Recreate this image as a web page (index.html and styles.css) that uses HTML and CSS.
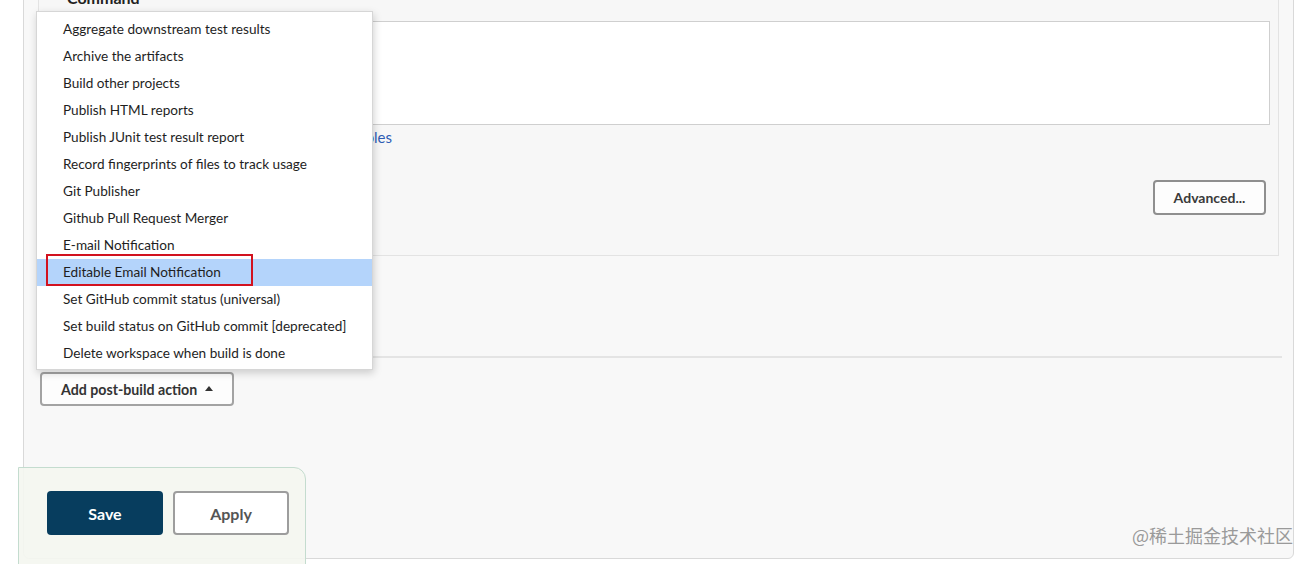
FILE: index.html
```html
<!DOCTYPE html>
<html>
<head>
<meta charset="utf-8">
<link rel="stylesheet" href="styles.css">
</head>
<body>
<div class="panel">
  <section class="step">
    <div class="step-label">Command</div>
    <div class="textarea"></div>
    <a class="env-link">See the list of available environment variables</a>
    <div class="step-actions"><button class="btn btn-adv">Advanced...</button></div>
  </section>
  <div class="divider"></div>
  <div class="post-build">
    <button class="btn btn-add">Add post-build action <span class="caret"></span></button>
  </div>
</div>

<ul class="menu">
  <li class="menu-item">Aggregate downstream test results</li>
  <li class="menu-item">Archive the artifacts</li>
  <li class="menu-item">Build other projects</li>
  <li class="menu-item">Publish HTML reports</li>
  <li class="menu-item">Publish JUnit test result report</li>
  <li class="menu-item">Record fingerprints of files to track usage</li>
  <li class="menu-item">Git Publisher</li>
  <li class="menu-item">Github Pull Request Merger</li>
  <li class="menu-item">E-mail Notification</li>
  <li class="menu-item is-active">Editable Email Notification</li>
  <li class="menu-item">Set GitHub commit status (universal)</li>
  <li class="menu-item">Set build status on GitHub commit [deprecated]</li>
  <li class="menu-item">Delete workspace when build is done</li>
  <li class="annotation"></li>
</ul>

<div class="bottom-bar">
  <button class="btn-save">Save</button>
  <button class="btn-apply">Apply</button>
</div>

<div class="watermark">@稀土掘金技术社区</div>
</body>
</html>
```

FILE: styles.css
```css
html, body {
  margin: 0;
  padding: 0;
  background: #ffffff;
  width: 1310px;
  height: 564px;
  overflow: hidden;
  position: relative;
  font-family: Lato, "Noto Sans", sans-serif;
  color: #222;
}

.panel {
  margin: -40px 16px 0 23px;
  padding: 10px 14px 152px;
  border: 1px solid #d9d9d9;
  border-radius: 0 0 6px 6px;
  background: #f8f8f8;
}

.step {
  border: 1px solid #e3e3e3;
  padding: 16px 8px 40px 28px;
  background: #f7f7f7;
}

.step-label {
  font-weight: 700;
  font-size: 16px;
  line-height: 20px;
  color: #222;
}

.textarea {
  margin-top: 13px;
  height: 104px;
  box-sizing: border-box;
  border: 1px solid #cfcfcf;
  background: #fff;
}

.env-link {
  display: block;
  width: 325px;
  text-align: right;
  white-space: nowrap;
  margin-top: 2px;
  line-height: 20px;
  font-size: 15px;
  color: #2f5db5;
}

.step-actions {
  display: flex;
  justify-content: flex-end;
  margin-top: 33px;
  margin-right: 4px;
}

.btn {
  font-family: Lato, "Noto Sans", sans-serif;
  font-weight: 700;
  background: #fdfdfd;
  border: 2px solid #8f8f8f;
  border-radius: 4px;
  color: #3a3a3a;
  box-sizing: border-box;
  padding: 0;
  cursor: pointer;
}

.btn-adv {
  width: 113px;
  height: 35px;
  font-size: 14px;
}

.divider {
  margin-top: 100px;
  margin-right: -3px;
  height: 2px;
  background: #e4e4e4;
}

.post-build {
  margin-top: 14px;
  margin-left: 2px;
}

.btn-add {
  display: flex;
  align-items: center;
  gap: 8px;
  height: 34px;
  width: 194px;
  padding-left: 19px;
  font-size: 14.2px;
  border-color: #a3a3a3;
  color: #333;
}

.caret {
  width: 0;
  height: 0;
  border-left: 4px solid transparent;
  border-right: 4px solid transparent;
  border-bottom: 5px solid #333;
  margin-top: -2px;
}

.menu {
  position: absolute;
  left: 36px;
  top: 11px;
  width: 337px;
  box-sizing: border-box;
  margin: 0;
  padding: 4px 0 2px;
  list-style: none;
  background: #fff;
  border: 1px solid #d6d6d6;
  box-shadow: 1px 3px 8px rgba(0, 0, 0, 0.18);
}

.menu-item {
  height: 27px;
  line-height: 27px;
  padding-left: 26px;
  font-size: 13.6px;
  color: #1e1e1e;
  white-space: nowrap;
}

.menu-item.is-active {
  background: #b4d4fb;
}

.annotation {
  position: absolute;
  left: 9px;
  top: 242px;
  width: 207px;
  height: 32px;
  box-sizing: border-box;
  border: 2px solid #d2121f;
}

.bottom-bar {
  position: absolute;
  left: 18px;
  top: 467px;
  width: 288px;
  height: 120px;
  box-sizing: border-box;
  border: 1px solid #c4dccf;
  border-top-right-radius: 12px;
  background: rgba(244, 246, 240, 0.92);
  padding: 23px 0 0 28px;
  display: flex;
  align-items: flex-start;
  gap: 10px;
}

.btn-save,
.btn-apply {
  width: 116px;
  height: 44px;
  box-sizing: border-box;
  border-radius: 4px;
  font-family: Lato, "Noto Sans", sans-serif;
  font-weight: 700;
  font-size: 16px;
  padding: 0;
}

.btn-save {
  background: #073d5e;
  border: none;
  color: #fff;
}

.btn-apply {
  background: #fff;
  border: 2px solid #9d9d9d;
  color: #555;
}

.watermark {
  position: absolute;
  right: 17px;
  top: 523px;
  font-family: "Noto Sans CJK SC", sans-serif;
  font-size: 18px;
  line-height: 24px;
  color: #9a9a9a;
}
```
